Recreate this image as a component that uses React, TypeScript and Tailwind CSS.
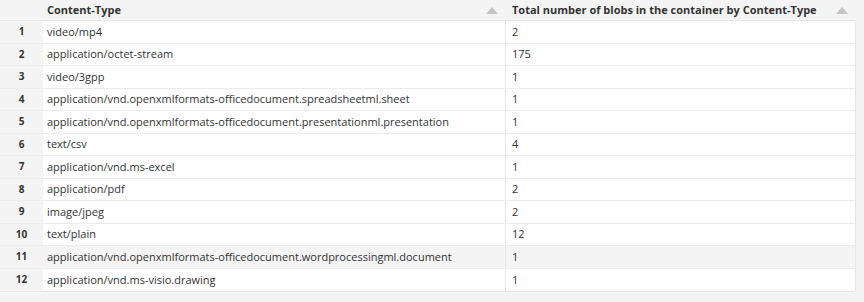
import React from "react";

const rows: [string, string][] = [
  ["video/mp4", "2"],
  ["application/octet-stream", "175"],
  ["video/3gpp", "1"],
  ["application/vnd.openxmlformats-officedocument.spreadsheetml.sheet", "1"],
  ["application/vnd.openxmlformats-officedocument.presentationml.presentation", "1"],
  ["text/csv", "4"],
  ["application/vnd.ms-excel", "1"],
  ["application/pdf", "2"],
  ["image/jpeg", "2"],
  ["text/plain", "12"],
  ["application/vnd.openxmlformats-officedocument.wordprocessingml.document", "1"],
  ["application/vnd.ms-visio.drawing", "1"],
];

function Tri() {
  return (
    <svg width="12" height="7" viewBox="0 0 12 7" className="shrink-0">
      <path d="M6 0 L12 7 L0 7 Z" fill="#c4c4c4" />
    </svg>
  );
}

export default function App() {
  return (
    <div
      className="w-[864px] h-[302px] bg-[#f4f4f4] text-[#333333] text-[11px]"
      style={{ fontFamily: '"Open Sans", "Noto Sans", sans-serif' }}
    >
      <div className="w-[856px]">
        <div className="flex h-[21px] items-center border-b border-[#e6e6e6] whitespace-nowrap">
          <div className="w-[43px] shrink-0" />
          <div className="w-[463px] shrink-0 flex items-center justify-between pl-[4px] pr-[8px] font-bold">
            <span>Content-Type</span>
            <Tri />
          </div>
          <div className="flex-1 flex items-center justify-between pl-[6px] pr-[8px] font-bold">
            <span>Total number of blobs in the container by Content-Type</span>
            <Tri />
          </div>
        </div>
        <div className="border-r border-b border-[#e6e6e6] rounded-br-[3px] overflow-hidden">
          {rows.map(([t, n], i) => (
            <div key={i} className="flex h-[22.5px] items-center border-b border-[#ececec] last:border-b-0 whitespace-nowrap">
              <div className="w-[43px] shrink-0 h-full flex items-center justify-center font-bold text-[10px] bg-[#f4f4f4]">
                {i + 1}
              </div>
              <div
                className={
                  "w-[463px] shrink-0 h-full flex items-center pl-[4px] border-r border-[#e6e6e6] " +
                  (i === 10 ? "bg-[#f4f4f4]" : "bg-white")
                }
              >
                {t}
              </div>
              <div className={"flex-1 h-full flex items-center pl-[6px] " + (i === 10 ? "bg-[#f4f4f4]" : "bg-white")}>
                {n}
              </div>
            </div>
          ))}
        </div>
      </div>
    </div>
  );
}
